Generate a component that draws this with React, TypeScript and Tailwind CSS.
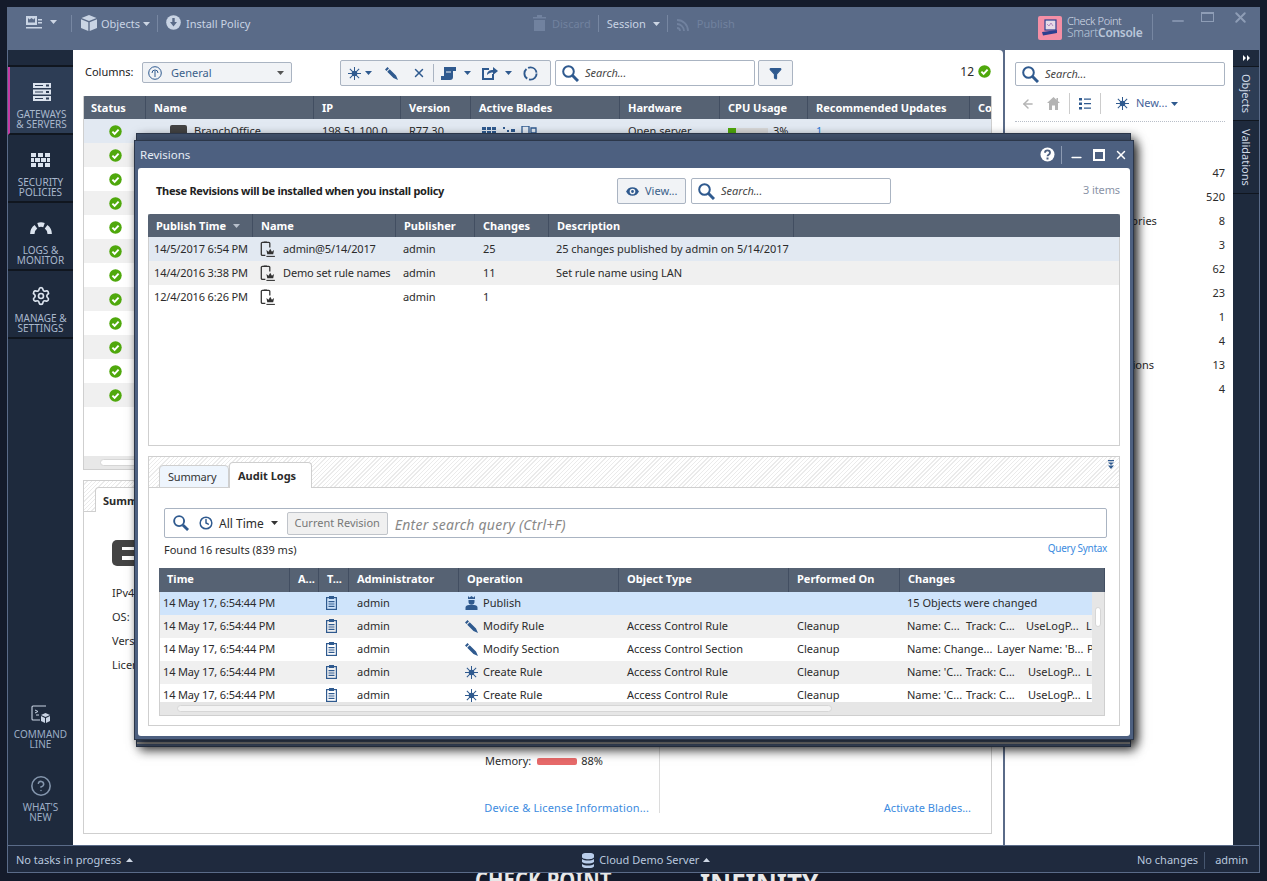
import React from 'react'
import { Eye, Settings, Filter, ArrowLeft, X, Minus, Clock, HelpCircle } from 'lucide-react'

const blue = '#2f5a8f'

function Check() {
  return (
    <svg width="13" height="13" viewBox="0 0 13 13">
      <circle cx="6.5" cy="6.5" r="6.2" fill="#4fa80c" />
      <path d="M3.4 6.7 5.6 8.9 9.6 4.6" fill="none" stroke="#fff" strokeWidth="1.9" />
    </svg>
  )
}

function Caret({ up, color = '#cdd6e4' }: { up?: boolean; color?: string }) {
  return (
    <svg width="7" height="4" viewBox="0 0 7 4" className="shrink-0">
      <path d={up ? 'M0 4 3.5 0 7 4z' : 'M0 0 3.5 4 7 0z'} fill={color} />
    </svg>
  )
}

function Star({ size = 13, color = blue }: { size?: number; color?: string }) {
  return (
    <svg width={size} height={size} viewBox="0 0 14 14" className="shrink-0">
      <path d="M7 0v14M0 7h14M2 2l10 10M12 2 2 12" stroke={color} strokeWidth="1.1" />
      <circle cx="7" cy="7" r="3" fill={color} />
    </svg>
  )
}

function Pencil({ size = 13, color = blue }: { size?: number; color?: string }) {
  return (
    <svg width={size} height={size} viewBox="0 0 13 13" className="shrink-0">
      <path d="M0 2.500 2.500 0 4 1.500 1.500 4zM2.200 4.700 4.700 2.200 11 8.500 13 13 8.500 11z" fill={color} />
    </svg>
  )
}

function SearchIcon({ size = 17 }: { size?: number }) {
  return (
    <svg width={size} height={size} viewBox="0 0 17 17" className="shrink-0">
      <circle cx="6.500" cy="6.500" r="5.300" fill="none" stroke={blue} strokeWidth="2" />
      <path d="M10.500 10.500 16 16" stroke={blue} strokeWidth="3" />
    </svg>
  )
}

function RevisionIcon() {
  return (
    <svg width="16" height="17" viewBox="0 0 15 16" className="shrink-0">
      <path d="M5 13.5H2.2a1 1 0 0 1-1-1V2.2a1 1 0 0 1 1-1h6a1 1 0 0 1 1 1V6" fill="none" stroke="#333" strokeWidth="1.2" />
      <path d="M3.5 0.5h3v1.4h-3z" fill="#333" />
      <path d="M6 8.4 8 10l1.6-2.8L11.2 10l2-1.6-.8 4H6.800z" fill="#333" />
      <path d="M6 14h8v1H6z" fill="#333" />
    </svg>
  )
}

function AuditIcon() {
  return (
    <svg width="11" height="14" viewBox="0 0 11 14">
      <rect x="0.6" y="1.6" width="9.800" height="11.800" fill="none" stroke={blue} strokeWidth="1.2" />
      <rect x="3" y="0" width="5" height="3" fill={blue} />
      <path d="M2.500 5h6v1.200h-6zM2.500 7.400h6v1.200h-6zM2.500 9.800h6v1.200h-6z" fill={blue} />
    </svg>
  )
}

function PublishIcon() {
  return (
    <svg width="13" height="14" viewBox="0 0 13 14" className="shrink-0">
      <path d="M3 0 4.500 1.500 6.500 0l2 1.500L10 0v3H3zM3.500 4h6v1.800a3 3 0 0 1-6 0zM0.500 14v-2.500c0-1.500 1.500-2.500 3.500-2.500h5c2 0 3.500 1 3.500 2.500V14z" fill={blue} />
    </svg>
  )
}

function HeaderCell({ w, children, pt = 1 }: { w: number; children?: React.ReactNode; pt?: number }) {
  return (
    <div
      className="h-full flex items-center pl-[8px] border-r border-[#424e61] shrink-0 overflow-hidden whitespace-nowrap"
      style={{ width: w, paddingTop: pt }}
    >
      {children}
    </div>
  )
}

function SideItem({ icon, lines, active }: { icon: React.ReactNode; lines: string[]; active?: boolean }) {
  return (
    <div
      className={`h-[68px] flex flex-col items-center pt-[15px] border-b-2 border-[#10161f] ${
        active ? 'bg-[#2d3d55] border-l-2 border-l-[#c63aa4]' : ''
      }`}
    >
      <div className="h-[20px] flex items-center">{icon}</div>
      <div className="mt-[7px] text-[10px] leading-[10px] text-[#a9b8cd] text-center">
        {lines.map((l) => (
          <div key={l}>{l}</div>
        ))}
      </div>
    </div>
  )
}

function TopBar() {
  return (
    <div className="h-[42px] bg-[#5a6b88] flex items-start pt-[7px] text-[11px] text-[#c9d4e4] shrink-0 whitespace-nowrap">
      <div className="w-[525px] flex items-start shrink-0">
        <svg width="16" height="16" viewBox="0 0 16 16" className="ml-[18px]">
          <path d="M0 1h11v9H0z" fill="#c9d4e4" />
          <path d="M2 3l1.500 1.500 2-1.500 2 1.500L9 3v4.500H2z" fill="#5a6b88" />
          <path d="M12 4h4v1.400h-4zM12 7h4v1.400h-4zM0 12h16v1.400H0z" fill="#c9d4e4" />
        </svg>
        <div className="ml-[8px] mt-[5px]"><Caret /></div>
        <div className="ml-[14px] w-px h-[17px] bg-[#7787a2]" />
        <svg width="16" height="16" viewBox="0 0 16 16" className="ml-[9px]">
          <path d="M8 0 15.500 3 8 6 .5 3zM0 4.200l7.300 3V16L0 13zM16 4.200l-7.300 3V16L16 13z" fill="#c9d4e4" />
        </svg>
        <span className="ml-[4px] leading-[18px]">Objects</span>
        <div className="ml-[3px] mt-[7px]"><Caret /></div>
        <div className="ml-[7px] w-px h-[17px] bg-[#7787a2]" />
        <svg width="15" height="15" viewBox="0 0 15 15" className="ml-[8px]">
          <circle cx="7.500" cy="7.500" r="7.300" fill="#c9d4e4" />
          <path d="M6.300 3h2.400v4H11l-3.500 4.500L4 7h2.300z" fill="#5a6b88" />
        </svg>
        <span className="ml-[5px] leading-[18px]">Install Policy</span>
      </div>

      <div className="w-[505px] flex items-start shrink-0">
        <svg width="13" height="16" viewBox="0 0 13 16">
          <path d="M4 0h5v2h4v1.500H0V2h4zM1 5h11v11H1z" fill="#71829f" />
        </svg>
        <span className="ml-[6px] leading-[18px] text-[#71829f]">Discard</span>
        <div className="ml-[7px] w-px h-[17px] bg-[#7787a2]" />
        <span className="ml-[8px] leading-[18px]">Session</span>
        <div className="ml-[7px] mt-[7px]"><Caret /></div>
        <div className="ml-[7px] w-px h-[17px] bg-[#7787a2]" />
        <svg width="16" height="16" viewBox="0 0 16 16" className="ml-[8px]">
          <path d="M1 5a11 11 0 0 1 11 11M1 9a7 7 0 0 1 7 7M1 13a3 3 0 0 1 3 3" fill="none" stroke="#71829f" strokeWidth="1.800" />
        </svg>
        <span className="ml-[5px] leading-[18px] text-[#71829f]">Publish</span>
      </div>

      <div className="w-[24px] h-[24px] mt-[1px] bg-[#f48fa6] rounded-[2px] flex items-center justify-center shrink-0">
        <svg width="18" height="18" viewBox="0 0 18 18">
          <rect x="4" y="1" width="11" height="10" fill="#e7dbe8" stroke="#2c3f8f" strokeWidth="1.200" />
          <path d="M1 13 16 11v3L2 16.500z" fill="#2c3f8f" />
          <path d="M6 5l2 2 2-3 2 3" fill="none" stroke="#a678b5" strokeWidth="0.800" />
        </svg>
      </div>
      <div className="ml-[5px] w-[85px] -mt-[1px] shrink-0">
        <div className="text-[11px] leading-[13px] text-[#d5dde9] tracking-[-0.4px] font-light">Check Point</div>
        <div className="text-[12px] leading-[12px] text-[#b9c6d9] tracking-[-0.3px] font-light">
          Smart<span className="font-semibold">Console</span>
        </div>
      </div>
      <div className="-mt-[1px] w-px h-[26px] bg-[#7787a2]" />
      <Minus size={18} className="ml-[16px] -mt-[3px] text-[#8e9db6]" strokeWidth={1.800} />
      <div className="ml-[14px] -mt-[3px] w-[13px] h-[10px] border border-t-2 border-[#8e9db6]" />
      <X size={17} className="ml-[18px] -mt-[6px] text-[#8e9db6]" strokeWidth={2.800} />
    </div>
  )
}

function Sidebar() {
  return (
    <div className="w-[65px] bg-[#1e2a3d] flex flex-col shrink-0">
      <div className="h-[17px] border-b-2 border-[#10161f]" />
      <SideItem
        active
        lines={['GATEWAYS', '& SERVERS']}
        icon={
          <svg width="18" height="18" viewBox="0 0 18 18">
            <path d="M0 0h18v5H0zM0 6.500h18v5H0zM0 13h18v5H0z" fill="#dbe3ee" />
            <path d="M2 2h8v1H2zM13 1.500h3v2h-3zM2 8.500h8v1H2zM13 8h3v2h-3zM2 15h8v1H2zM13 14.500h3v2h-3z" fill="#2d3d55" />
          </svg>
        }
      />
      <SideItem
        lines={['SECURITY', 'POLICIES']}
        icon={
          <svg width="19" height="14" viewBox="0 0 19 14">
            <path d="M0 0h5v4H0zM7 0h5v4H7zM14 0h5v4h-5zM0 5h3v4H0zM4 5h5v4H4zM10 5h5v4h-5zM16 5h3v4h-3zM0 10h5v4H0zM7 10h5v4H7zM14 10h5v4h-5z" fill="#dbe3ee" />
          </svg>
        }
      />
      <SideItem
        lines={['LOGS &', 'MONITOR']}
        icon={
          <svg width="22" height="14" viewBox="0 0 22 14">
            <path d="M2.300 13a9 9 0 0 1 3.600-7.300M8 4.100a9 9 0 0 1 6 0M16.100 5.700a9 9 0 0 1 3.600 7.300" fill="none" stroke="#dbe3ee" strokeWidth="4.400" />
          </svg>
        }
      />
      <SideItem lines={['MANAGE &', 'SETTINGS']} icon={<Settings size={20} className="text-[#dbe3ee]" />} />
      <div className="flex-1" />
      <div className="flex flex-col items-center text-[10px] leading-[10px] text-[#9cadc5] text-center">
        <svg width="19" height="18" viewBox="0 0 19 18">
          <path d="M15 1H2a1 1 0 0 0-1 1v12a1 1 0 0 0 1 1h7" fill="none" stroke="#c9d4e4" strokeWidth="1.100" />
          <path d="M4 5l3 1.500L4 8M8 10h-3" fill="none" stroke="#c9d4e4" />
          <path d="M10 10l4.500-2 4.500 2-4.500 2zM10 11l4 2v5l-4-2zM19 11l-4 2v5l4-2z" fill="#c9d4e4" />
        </svg>
        <div className="mt-[6px]">COMMAND</div>
        <div>LINE</div>
        <HelpCircle size={22} className="mt-[26px] text-[#8496ad]" strokeWidth={1.700} />
        <div className="mt-[5px]">WHAT'S</div>
        <div>NEW</div>
      </div>
      <div className="h-[23px]" />
    </div>
  )
}

function BladeIcons() {
  return (
    <svg width="56" height="10" viewBox="0 0 56 10" className="ml-[10px]">
      <path d="M1 1h4v3H1zM6 1h4v3H6zM11 1h4v3h-4zM1 5h4v3H1zM6 5h4v3H6zM11 5h4v3h-4z" fill={blue} />
      <path d="M22 1h2v2h-2zM26 4h2v2h-2zM22 7h2v2h-2zM30 3h4v3h-4z" fill={blue} />
      <path d="M41 0h7v8h-7zM50 2h5v5h-5z" fill="none" stroke={blue} strokeWidth="1.300" />
    </svg>
  )
}

function MainPanel() {
  const cols = [63, 168, 87, 70, 149, 100, 88, 162, 22]
  return (
    <div className="w-[930px] bg-white rounded-tr-[4px] pl-[10px] pr-[11px] shrink-0 flex flex-col text-[11px] text-[#2b2b2b]">
      <div className="h-[46px] flex items-start pt-[10px] shrink-0">
        <span className="ml-[2px] mt-[4px] w-[57px] text-[#222]">Columns:</span>
        <div className="mt-[2px] w-[150px] h-[21px] border border-[#aab4c2] rounded-[2px] bg-[#f1f3f6] flex items-center pl-[5px] pr-[7px]">
          <svg width="14" height="14" viewBox="0 0 14 14">
            <circle cx="7" cy="7" r="6.300" fill="none" stroke={blue} />
            <path d="M7 5v6M4 7a3 3 0 0 1 6 0" fill="none" stroke={blue} />
          </svg>
          <span className="ml-[9px] pt-[1px] text-[#3a5f8a] flex-1">General</span>
          <Caret color="#555" />
        </div>
        <div className="ml-[48px] h-[26px] w-[211px] border border-[#aab4c2] rounded-[2px] bg-[#f1f3f6] flex items-center pl-[7px]">
          <Star />
          <div className="ml-[4px]"><Caret color={blue} /></div>
          <div className="ml-[13px]"><Pencil /></div>
          <X size={14} strokeWidth={2.500} className="ml-[14px] text-[#2f5a8f]" />
          <div className="ml-[7px] w-px h-[18px] bg-[#aab4c2]" />
          <svg width="15" height="13" viewBox="0 0 15 13" className="ml-[7px]">
            <path d="M3 0h12v4h-3v6a3 3 0 0 1-3 3H0V9h3z" fill={blue} />
            <path d="M5 5h5" stroke="#f1f3f6" />
          </svg>
          <div className="ml-[8px]"><Caret color={blue} /></div>
          <svg width="16" height="14" viewBox="0 0 16 14" className="ml-[11px]">
            <path d="M7 3H1v10h10V8" fill="none" stroke={blue} strokeWidth="2" />
            <path d="M5 9c0-4 3-5 6-5V1l5 4-5 4V6.500C9 6.500 7 7 5 9z" fill={blue} />
          </svg>
          <div className="ml-[7px]"><Caret color={blue} /></div>
          <svg width="15" height="15" viewBox="0 0 16 16" className="ml-[11px]">
            <circle cx="8" cy="8" r="6.500" fill="none" stroke={blue} strokeWidth="2" strokeDasharray="11.600 2" />
          </svg>
        </div>
        <div className="ml-[4px] h-[26px] w-[200px] border border-[#aab4c2] rounded-[2px] flex items-center pl-[6px]">
          <SearchIcon />
          <span className="ml-[6px] italic text-[#444]">Search...</span>
        </div>
        <div className="ml-[3px] h-[26px] w-[35px] border border-[#aab4c2] rounded-[2px] bg-[#f1f3f6] flex items-center justify-center">
          <Filter size={13} fill="#2f5a8f" className="text-[#2f5a8f]" />
        </div>
        <div className="flex-1" />
        <span className="mt-[4px] text-[12px] leading-[16px] mr-[4px]">12</span>
        <div className="mt-[5px] mr-[1px]"><Check /></div>
      </div>

      <div className="h-[374px] border-x border-b border-[#cfcfcf] flex flex-col shrink-0 overflow-hidden">
        <div className="-mx-px h-[23px] bg-[#566273] flex items-center text-white font-bold text-[11px] shrink-0 rounded-t-[2px]">
          {['Status', 'Name', 'IP', 'Version', 'Active Blades', 'Hardware', 'CPU Usage', 'Recommended Updates', 'Co'].map((h, i) => (
            <HeaderCell key={h} w={cols[i]}>{h}</HeaderCell>
          ))}
        </div>
        <div className="h-[24px] bg-[#e2e9f2] flex items-center shrink-0">
          <div className="w-[61px] flex justify-center pl-[1px]"><Check /></div>
          <div className="w-[169px] pl-[25px] flex items-center">
            <div className="w-[17px] h-[12px] bg-[#444] rounded-[2px]" />
            <span className="ml-[7px]">BranchOffice</span>
          </div>
          <div className="w-[87px] pl-[8px]">198.51.100.0</div>
          <div className="w-[70px] pl-[8px]">R77.30</div>
          <div className="w-[149px]"><BladeIcons /></div>
          <div className="w-[100px] pl-[8px]">Open server</div>
          <div className="w-[88px] pl-[8px] flex items-center">
            <div className="w-[8px] h-[7px] bg-[#4fa80c]" />
            <div className="w-[32px] h-[7px] bg-[#d8d8d8]" />
            <span className="ml-[5px]">3%</span>
          </div>
          <div className="pl-[8px] text-[#2b7ad6]">1</div>
        </div>
        {[...Array(11)].map((_, i) => (
          <div key={i} className={`h-[24px] flex items-center shrink-0 ${i % 2 === 0 ? 'bg-[#f0f0f0]' : 'bg-white'}`}>
            <div className="w-[61px] flex justify-center pl-[1px]"><Check /></div>
          </div>
        ))}
        <div className="flex-1" />
        <div className="h-[13px] bg-[#e8e8e8] flex items-center pl-[16px] shrink-0">
          <div className="w-[300px] h-[7px] bg-white border border-[#d6d6d6] rounded-full" />
        </div>
      </div>

      <div className="mt-[10px] h-[354px] border border-[#cfcfcf] flex flex-col shrink-0">
        <div className="h-[31px] flex items-end pl-[11px] shrink-0 border-b border-[#cfcfcf] bg-[repeating-linear-gradient(135deg,#fff_0,#fff_2px,#ebebeb_2px,#ebebeb_3px)]">
          <div className="w-[100px] h-[25px] -mb-px bg-white border border-b-0 border-[#cfcfcf] rounded-t-[4px] pl-[7px] pt-[5px] font-bold">
            Summary
          </div>
        </div>
        <div className="flex-1 flex">
          <div className="w-[576px] border-r border-[#dcdcdc] mb-[20px] pb-[-3px] flex flex-col pl-[28px] pr-[10px]">
            <div className="mt-[28px] w-[30px] h-[26px] bg-[#444] rounded-[5px] flex items-center justify-end">
              <div className="w-[20px] h-[13px] bg-white flex items-center">
                <div className="w-full h-[6px] bg-[#444]" />
              </div>
            </div>
            <div className="mt-[15px] leading-[24px]">
              <div>IPv4 Address:</div>
              <div>OS:</div>
              <div>Version:</div>
              <div>License:</div>
            </div>
            <div className="flex-1" />
            <div className="ml-[373px] flex items-center h-[16px] mb-[30px] translate-y-[3px]">
              <span>Memory:</span>
              <div className="ml-[6px] w-[40px] h-[7px] bg-[#e76a6a] rounded-[2px]" />
              <span className="ml-[4px]">88%</span>
            </div>
            <div className="text-right text-[#3c8be0] whitespace-nowrap tracking-[0.15px] translate-y-[3px]">Device &amp; License Information...</div>
          </div>
          <div className="flex-1 flex flex-col justify-end items-end pr-[20px] pb-[17px] text-[#3c8be0]">
            Activate Blades...
          </div>
        </div>
      </div>
    </div>
  )
}

const objectRows: [string, number][] = [
  ['Network Objects', 47],
  ['Services', 520],
  ['Applications/Categories', 8],
  ['VPN Communities', 3],
  ['Data Types', 62],
  ['Users', 23],
  ['Servers', 1],
  ['Time Objects', 4],
  ['UserCheck Interactions', 13],
  ['Limit', 4],
]

function RightPanel() {
  return (
    <div className="w-[228px] bg-white pl-[10px] pr-[8px] pt-[12px] shrink-0 text-[11px] text-[#2b2b2b]">
      <div className="h-[24px] border border-[#aab4c2] rounded-[2px] flex items-center pl-[6px]">
        <SearchIcon />
        <span className="ml-[6px] italic text-[#444]">Search...</span>
      </div>
      <div className="h-[36px] flex items-center border-b border-dotted border-[#b8bec8] text-[#46629a]">
        <ArrowLeft size={14} className="ml-[6px] text-[#b4b4b4]" strokeWidth={2.500} />
        <svg width="13" height="13" viewBox="0 0 13 13" className="ml-[12px]">
          <path d="M6.500 0 13 6h-2v7H8V8.500H5V13H2V6H0zM9.500 1H11v3L9.500 2.700z" fill="#b4b4b4" />
        </svg>
        <div className="ml-[9px] w-px h-[21px] bg-[#ccc]" />
        <svg width="12" height="12" viewBox="0 0 12 12" className="ml-[9px]">
          <path d="M0 0h3v2.500H0zM0 4.500h3V7H0zM0 9h3v2.500H0zM5 .5h7v1.200H5zM5 5h7v1.200H5zM5 9.500h7v1.200H5z" fill={blue} />
        </svg>
        <div className="ml-[9px] w-px h-[21px] bg-[#ccc]" />
        <div className="ml-[15px]"><Star /></div>
        <span className="ml-[7px]">New...</span>
        <div className="ml-[4px]"><Caret color={blue} /></div>
      </div>
      <div className="mt-[39px]">
        {objectRows.map(([name, n]) => (
          <div key={name} className="h-[24px] flex items-center">
            <span className="ml-[19px] flex-1">{name}</span>
            <span>{n}</span>
          </div>
        ))}
      </div>
    </div>
  )
}

function RightTabs() {
  return (
    <div className="flex-1 bg-[#1e2a3d] text-[11px] text-[#d3dce9] flex flex-col">
      <div className="h-[16px] flex items-center justify-center">
        <svg width="7" height="6" viewBox="0 0 7 6">
          <path d="M0 0 3 3 0 6zM4 0 7 3 4 6z" fill="#fff" />
        </svg>
      </div>
      <div className="h-[55px] bg-[#2d3d55] border-y border-[#10161f] flex items-center justify-center">
        <span className="[writing-mode:vertical-rl]">Objects</span>
      </div>
      <div className="h-[73px] border-b border-[#10161f] flex items-center justify-center">
        <span className="[writing-mode:vertical-rl]">Validations</span>
      </div>
    </div>
  )
}

function StatusBar() {
  return (
    <div className="h-[27px] pt-[2px] bg-[#1f2a3e] border-t border-[#5a6b88] flex items-center text-[11px] text-[#b9c8de] shrink-0">
      <span className="ml-[8px]">No tasks in progress</span>
      <div className="ml-[5px]"><Caret up /></div>
      <svg width="12" height="15" viewBox="0 0 12 15" className="ml-[449px]">
        <path d="M0 2c0-3 12-3 12 0v2c0 3-12 3-12 0zM0 6c3 2 9 2 12 0v3c-3 2-9 2-12 0zM0 11c3 2 9 2 12 0v2c0 3-12 3-12 0z" fill="#b9cdea" />
      </svg>
      <span className="ml-[5px]">Cloud Demo Server</span>
      <div className="ml-[4px]"><Caret up /></div>
      <div className="flex-1" />
      <span>No changes</span>
      <div className="ml-[6px] w-px h-[17px] bg-[#46566f]" />
      <span className="ml-[10px] mr-[11px]">admin</span>
    </div>
  )
}

const revisions = [
  ['14/5/2017 6:54 PM', 'admin@5/14/2017', 'admin', '25', '25 changes published by admin on 5/14/2017'],
  ['14/4/2016 3:38 PM', 'Demo set rule names', 'admin', '11', 'Set rule name using LAN'],
  ['12/4/2016 6:26 PM', '', 'admin', '1', ''],
]

type Chip = [string, number]
const logs: { op: string; kind: 'publish' | 'modify' | 'create'; type: string; on: string; chips: Chip[] }[] = [
  { op: 'Publish', kind: 'publish', type: '', on: '', chips: [['15 Objects were changed', 180]] },
  { op: 'Modify Rule', kind: 'modify', type: 'Access Control Rule', on: 'Cleanup', chips: [['Name: C...', 59], ['Track: C...', 60], ['UseLogP...', 60], ['L', 10]] },
  { op: 'Modify Section', kind: 'modify', type: 'Access Control Section', on: 'Cleanup', chips: [['Name: Change...', 90], ['Layer Name: \'B...', 90], ['P', 10]] },
  { op: 'Create Rule', kind: 'create', type: 'Access Control Rule', on: 'Cleanup', chips: [['Name: \'C...', 59], ['Track: C...', 62], ['UseLogP...', 58], ['L', 10]] },
  { op: 'Create Rule', kind: 'create', type: 'Access Control Rule', on: 'Cleanup', chips: [['Name: \'C...', 59], ['Track: C...', 62], ['UseLogP...', 58], ['L', 10]] },
]

function AuditLogs() {
  const cols = [131, 29, 30, 110, 160, 170, 111, 205]
  return (
    <div className="ml-[10px] mr-[14px] mt-[9px] border border-[#cfcfcf]">
      <div className="h-[24px] bg-[#566273] flex items-center text-white font-bold -mt-px -mx-px">
        {['Time', 'A...', 'T...', 'Administrator', 'Operation', 'Object Type', 'Performed On', 'Changes'].map((h, i) => (
          <HeaderCell key={h} w={cols[i]} pt={0}>{h}</HeaderCell>
        ))}
      </div>
      <div className="flex h-[110px]">
        <div className="w-[932px] overflow-hidden">
          {logs.map((l, i) => (
            <div
              key={i}
              className={`h-[23px] flex items-center whitespace-nowrap ${
                i === 0 ? 'bg-[#cfe4fb]' : i % 2 === 1 ? 'bg-[#f0f0f0]' : 'bg-white'
              }`}
            >
              <div className="w-[130px] shrink-0 pl-[3px] pt-[1px] tracking-[-0.15px]">14 May 17, 6:54:44 PM</div>
              <div className="w-[29px] shrink-0" />
              <div className="w-[30px] shrink-0 pl-[7px]"><AuditIcon /></div>
              <div className="w-[110px] shrink-0 pl-[8px]">admin</div>
              <div className="w-[160px] shrink-0 pl-[6px] flex items-center gap-[5px]">
                {l.kind === 'publish' ? <PublishIcon /> : l.kind === 'modify' ? <Pencil size={13} /> : <Star size={13} />}
                <span>{l.op}</span>
              </div>
              <div className="w-[170px] shrink-0 pl-[8px]">{l.type}</div>
              <div className="w-[111px] shrink-0 pl-[8px]">{l.on}</div>
              <div className="pl-[7px] flex shrink-0">
                {l.chips.map(([t, w], j) => (
                  <span key={j} className="shrink-0" style={{ width: w }}>{t}</span>
                ))}
              </div>
            </div>
          ))}
        </div>
        <div className="flex-1 bg-[#e6e6e6] pt-[15px] flex justify-center">
          <div className="w-[6px] h-[20px] bg-white rounded-full border border-[#d6d6d6]" />
        </div>
      </div>
      <div className="h-[13px] bg-[#e6e6e6] flex items-center pl-[17px]">
        <div className="w-[655px] h-[7px] bg-[#f4f4f4] border border-[#d6d6d6] rounded-full" />
      </div>
    </div>
  )
}

function Dialog() {
  const cols = [105, 143, 79, 74, 245]
  return (
    <>
      <div className="absolute left-[136px] top-[133px] w-[995px] h-[614px] bg-[#3f4f69] border border-[#2c374a] shadow-[4px_4px_10px_rgba(0,0,0,0.65)] flex flex-col justify-end">
        <div className="h-[2px] mb-[2px] bg-[#8a8a8a]" />
      </div>
      <div className="absolute left-[134px] top-[140px] w-[1000px] h-[600px] bg-[#4d6080] border border-[#2c374a] shadow-[4px_4px_10px_rgba(0,0,0,0.65)] flex flex-col px-[3px] pb-[3px] text-[11px] text-[#2b2b2b]">
        <div className="h-[27px] flex items-center text-[#e6ecf5] shrink-0">
          <span className="ml-[2px] text-[11.500px]">Revisions</span>
          <div className="flex-1" />
          <svg width="15" height="15" viewBox="0 0 15 15">
            <circle cx="7.500" cy="7.500" r="7" fill="#fff" />
            <path d="M5 5.800c0-3.200 5-3.200 5 0 0 2-2.500 1.800-2.500 3.500" fill="none" stroke="#4d6080" strokeWidth="1.800" />
            <path d="M6.500 10.500h2v2h-2z" fill="#4d6080" />
          </svg>
          <div className="ml-[6px] w-px h-[18px] bg-[#8c9ab2]" />
          <Minus size={15} strokeWidth={2.500} className="ml-[7px] mt-[5px] text-white" />
          <div className="ml-[9px] w-[12px] h-[12px] border-2 border-t-[3px] border-white" />
          <X size={14} strokeWidth={2.500} className="ml-[9px] mr-[2px] text-white" />
        </div>
        <div className="flex-1 bg-white rounded-[3px] px-[10px] pt-[10px] flex flex-col">
          <div className="h-[26px] flex items-center shrink-0">
            <span className="ml-[8px] w-[461px] font-bold text-[#222] tracking-[-0.27px]">These Revisions will be installed when you install policy</span>
            <div className="h-[26px] w-[69px] border border-[#aab4c2] rounded-[2px] bg-[#f1f3f6] flex items-center pl-[6px] text-[#3a5f8a]">
              <Eye size={17} fill="#2f5a8f" stroke="#f1f3f6" />
              <span className="ml-[4px]">View...</span>
            </div>
            <div className="ml-[5px] h-[26px] w-[200px] border border-[#aab4c2] rounded-[2px] flex items-center pl-[6px]">
              <SearchIcon />
              <span className="ml-[6px] italic text-[#444]">Search...</span>
            </div>
            <div className="flex-1" />
            <span className="text-[#8a93a6] -mt-[2px] tracking-[-0.1px]">3 items</span>
          </div>

          <div className="mt-[10px] h-[232px] border-x border-b border-[#cfcfcf] shrink-0">
            <div className="-mx-px h-[23px] bg-[#566273] flex items-center text-white font-bold rounded-t-[2px]">
              <HeaderCell w={cols[0]}>
                Publish Time
                <span className="ml-[7px]"><Caret color="#b8c0cc" /></span>
              </HeaderCell>
              {['Name', 'Publisher', 'Changes', 'Description'].map((h, i) => (
                <HeaderCell key={h} w={cols[i + 1]}>{h}</HeaderCell>
              ))}
            </div>
            {revisions.map((r, i) => (
              <div
                key={r[0]}
                className={`h-[24px] pt-[1px] flex items-center whitespace-nowrap tracking-[-0.05px] ${
                  i === 0 ? 'bg-[#e2e9f2]' : i === 1 ? 'bg-[#f0f0f0]' : 'bg-white'
                }`}
              >
                <div className="w-[104px] shrink-0 pl-[5px] tracking-[-0.15px]">{r[0]}</div>
                <div className="w-[143px] shrink-0 pl-[7px] flex items-center gap-[7px] tracking-[-0.15px]">
                  <RevisionIcon />
                  <span>{r[1]}</span>
                </div>
                <div className="w-[79px] shrink-0 pl-[7px]">{r[2]}</div>
                <div className="w-[74px] shrink-0 pl-[8px]">{r[3]}</div>
                <div className="pl-[7px]">{r[4]}</div>
              </div>
            ))}
          </div>

          <div className="mt-[10px] h-[270px] border border-[#cfcfcf] shrink-0">
            <div className="relative h-[31px] border-b border-[#cfcfcf] flex items-end pl-[10px] bg-[repeating-linear-gradient(135deg,#fff_0,#fff_2px,#ebebeb_2px,#ebebeb_3px)]">
              <div className="w-[70px] h-[23px] -mb-px bg-[#eef5fd] border border-[#cfcfcf] rounded-t-[4px] pl-[8px] pt-[3px] text-[#333] tracking-[-0.2px]">Summary</div>
              <div className="w-[83px] h-[26px] -mb-px bg-white border border-b-0 border-[#cfcfcf] rounded-t-[4px] pl-[8px] pt-[5px] font-bold">Audit Logs</div>
              <div className="flex-1" />
              <svg width="6" height="9" viewBox="0 0 6 9" className="absolute right-[5px] top-[3px]">
                <path d="M0 0h6v1.200H0zM0 2.500h6L3 5zM0 5.500h6L3 9z" fill={blue} />
              </svg>
            </div>
            <div className="mt-[20px] mx-[15px] mr-[12px] h-[30px] border border-[#aab4c2] rounded-[2px] flex items-center pl-[8px]">
              <SearchIcon size={16} />
              <Clock size={14} strokeWidth={2.500} className="ml-[10px] text-[#2f5a8f]" />
              <span className="ml-[6px] text-[12px] pt-[1px]">All Time</span>
              <div className="ml-[7px]"><Caret color="#333" /></div>
              <div className="ml-[9px] h-[23px] w-[101px] border border-[#c0c4ca] rounded-[2px] bg-[#f0f0f0] flex items-center justify-center text-[#777]">Current Revision</div>
              <span className="ml-[7px] pt-[2px] italic text-[#888] text-[14px] tracking-[0.25px]">Enter search query (Ctrl+F)</span>
            </div>
            <div className="mx-[15px] mr-[12px] mt-[4px] flex items-center justify-between">
              <span>Found 16 results (839 ms)</span>
              <span className="text-[#3c8be0] text-[10px] tracking-[-0.3px] -mt-[3px]">Query Syntax</span>
            </div>
            <AuditLogs />
          </div>
        </div>
      </div>
    </>
  )
}

export default function App() {
  return (
    <div className="relative w-[1267px] h-[881px] overflow-hidden bg-[#141b2b] font-['Noto_Sans',sans-serif]">
      <div className="absolute left-[475px] top-[865px] text-[26px] leading-[30px] font-bold text-[#e8e8e8] whitespace-nowrap origin-left scale-x-[0.78]">CHECK POINT</div>
      <div className="absolute left-[700px] top-[868px] text-[26px] leading-[30px] font-bold text-[#e8e8e8] whitespace-nowrap">INFINITY</div>
      <div className="absolute left-[7px] top-[7px] w-[1253px] h-[866px] border border-[#5a6b88] flex flex-col">
        <TopBar />
        <div className="flex-1 flex min-h-0 bg-[#5a6b88]">
          <Sidebar />
          <MainPanel />
          <div className="w-[2px] shrink-0" />
          <RightPanel />
          <RightTabs />
        </div>
        <StatusBar />
      </div>
      <Dialog />
    </div>
  )
}
